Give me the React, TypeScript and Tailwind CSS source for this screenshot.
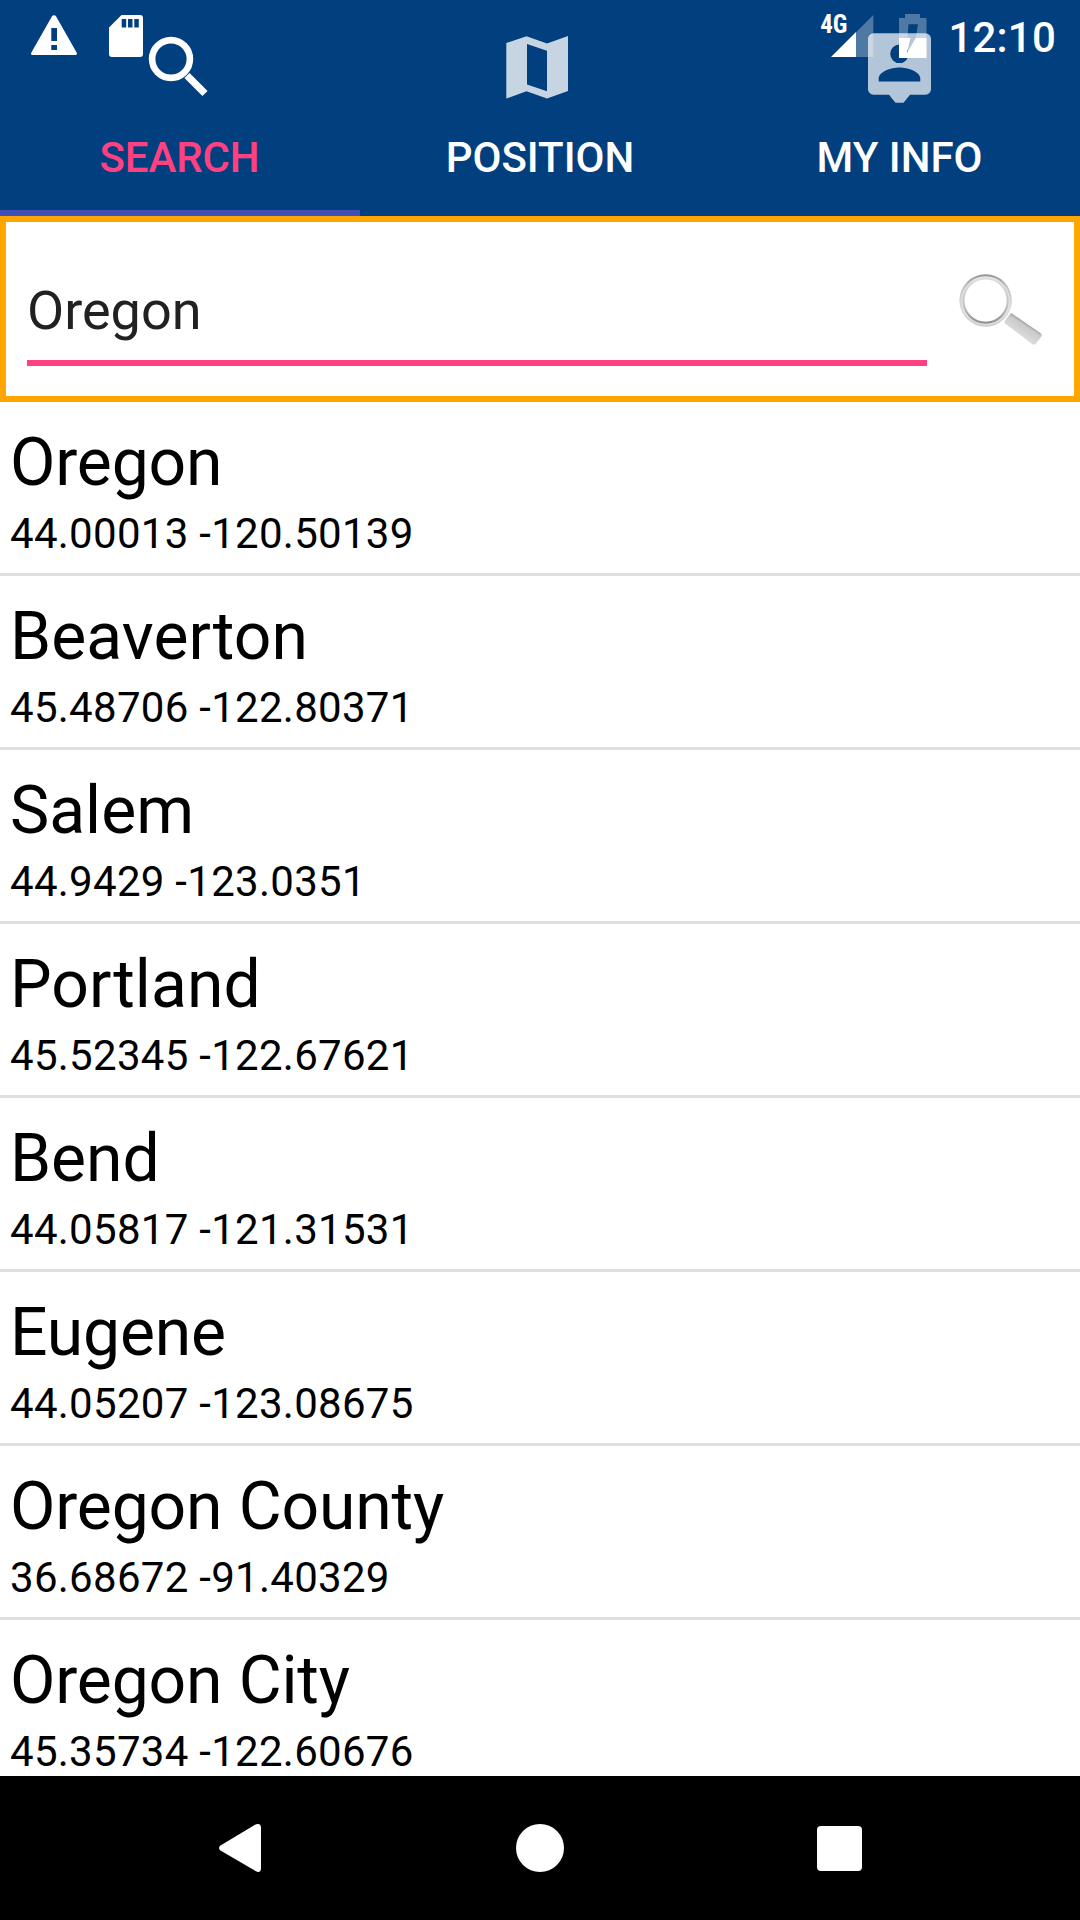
const rows = [
  ["Oregon", "44.00013 -120.50139", "tracking-[-0.15px]"],
  ["Beaverton", "45.48706 -122.80371", "tracking-[0.1px]"],
  ["Salem", "44.9429 -123.0351", "tracking-normal"],
  ["Portland", "45.52345 -122.67621", "tracking-[0.1px]"],
  ["Bend", "44.05817 -121.31531", "tracking-normal"],
  ["Eugene", "44.05207 -123.08675", "tracking-[-0.15px]"],
  ["Oregon County", "36.68672 -91.40329", "tracking-[-0.15px]"],
  ["Oregon City", "45.35734 -122.60676", "tracking-[-0.15px]"],
];

function WarningIcon() {
  return (
    <svg className="h-[41px] w-[46px]" viewBox="0 0 46 41">
      <path fill="#fff" fillRule="evenodd" d="M21 1.3a2.3 2.3 0 0 1 4 0L45.6 37.6c.8 1.5.2 2.4-1.4 2.4H1.8c-1.6 0-2.2-.9-1.4-2.4ZM20.3 13v13h5.7V13ZM20.3 30v5h5.7v-5Z" />
    </svg>
  );
}

function SdCardIcon() {
  return (
    <svg className="h-[42px] w-[34px]" viewBox="0 0 34 42">
      <path fill="#fff" fillRule="evenodd" d="M12.5 0H31a3 3 0 0 1 3 3v36a3 3 0 0 1-3 3H3a3 3 0 0 1-3-3V12.5ZM12.7 4v8.5h4.500V4ZM19 4v8.500h4.500V4ZM25.300 4v8.500h4.500V4Z" />
    </svg>
  );
}

function SignalIcon() {
  return (
    <svg className="h-[42px] w-[43px]" viewBox="0 0 43 42">
      <path fill="#fff" fillOpacity=".3" d="M25 17.300 42.300 0v42H25Z" />
      <path fill="#fff" d="M0 42 25 17v25Z" />
    </svg>
  );
}

function BatteryIcon() {
  return (
    <svg className="h-[44px] w-[28px]" viewBox="0 0 28 44">
      <path fill="#fff" fillOpacity=".3" fillRule="evenodd" d="M6 0h15v4h6.500v20H16.700L19 10.300H9.500L8.500 24H0V4h6Z" />
      <path fill="#fff" d="M0 24h11.500L8 39 16.700 24H27.500v20H0Z" />
    </svg>
  );
}

function TabSearchIcon() {
  return (
    <svg className="h-[72px] w-[72px]" viewBox="144 30 72 72">
      <circle cx="171" cy="59" r="18.900" fill="none" stroke="#fff" strokeWidth="6.600" />
      <path d="M187 75.500 205 93.500" stroke="#fff" strokeWidth="7.200" />
    </svg>
  );
}

function TabMapIcon() {
  return (
    <svg className="h-[72px] w-[72px]" viewBox="504 30 72 72">
      <path fill="#fff" fillOpacity=".78" fillRule="evenodd" d="M506.300 43 526.500 36.300 547 43.600 568 36V91L547 98.500 526.500 91.300 506.300 98.500ZM527 44V84.500L547 91.300V50.700Z" />
    </svg>
  );
}

function TabPersonIcon() {
  return (
    <svg className="h-[73px] w-[72px]" viewBox="864 30 72 73">
      <path fill="#fff" fillOpacity=".7" fillRule="evenodd" d="M873.500 33.300h52a5.500 5.500 0 0 1 5.500 5.500v50.400a5.500 5.500 0 0 1-5.500 5.500H910l-6.500 8h-8l-6.500-8h-15.500a5.500 5.500 0 0 1-5.500-5.500V38.800a5.500 5.500 0 0 1 5.500-5.500ZM899.500 44.500a9.300 9.300 0 1 0 0 18.600 9.300 9.300 0 1 0 0-18.600ZM878.700 81.500h41.600v-3c0-6.500-12-11-20.800-11s-20.800 4.500-20.800 11Z" />
    </svg>
  );
}

function MagnifierIcon() {
  return (
    <svg className="h-[96px] w-[96px]" viewBox="950 260 96 96">
      <defs>
        <linearGradient id="rim" x1="0" y1="0" x2="0" y2="1">
          <stop offset="0" stopColor="#989898" />
          <stop offset=".25" stopColor="#c6c6c6" />
          <stop offset=".7" stopColor="#dedede" />
          <stop offset="1" stopColor="#cfcfcf" />
        </linearGradient>
        <linearGradient id="rimInner" x1="0" y1="0" x2="0" y2="1">
          <stop offset="0" stopColor="#e0e0e0" />
          <stop offset=".6" stopColor="#c4c4c4" />
          <stop offset="1" stopColor="#8e8e8e" />
        </linearGradient>
        <linearGradient id="handle" gradientUnits="userSpaceOnUse" x1="1028" y1="322" x2="1020" y2="334">
          <stop offset="0" stopColor="#8c8c8c" />
          <stop offset=".3" stopColor="#cacaca" />
          <stop offset="1" stopColor="#dadada" />
        </linearGradient>
      </defs>
      <circle cx="986.600" cy="300.500" r="23.500" fill="none" stroke="#e6e6e6" strokeWidth="5" />
      <circle cx="986.600" cy="300.500" r="25.200" fill="none" stroke="url(#rim)" strokeWidth="2" />
      <circle cx="986.600" cy="300.500" r="22.200" fill="none" stroke="url(#rimInner)" strokeWidth="2" />
      <path fill="url(#handle)" d="M1013 313.500 1042 333.500Q1043 335 1042 337L1036.500 344Q1035 345.500 1033 344L1006 323.500Q1005 322 1006 320.500L1011 314Q1012 313 1013 313.500Z" />
    </svg>
  );
}

export default function App() {
  return (
    <div className="flex h-[1920px] w-[1080px] flex-col overflow-hidden bg-white font-['Roboto',sans-serif]">
      <header className="relative h-[216px] shrink-0 bg-[#023f7f]">
        <div className="grid h-full grid-cols-3 text-[42px] leading-[50px] font-medium tracking-[-0.1px] text-white">
          <div className="flex flex-col items-center border-b-[6px] border-[#3f51b5] pt-[30px] text-[#ff4081]">
            <TabSearchIcon />
            <span className="mt-[31px] mr-px">SEARCH</span>
          </div>
          <div className="flex flex-col items-center pt-[30px]">
            <TabMapIcon />
            <span className="mt-[31px] tracking-normal">POSITION</span>
          </div>
          <div className="flex flex-col items-center pt-[30px]">
            <TabPersonIcon />
            <span className="mt-[30px] mr-px tracking-normal">MY INFO</span>
          </div>
        </div>
        <div className="absolute inset-x-0 top-0 flex h-[72px] items-start pr-[24px] pl-[31px] text-white">
          <div className="mt-[15px] flex gap-[32px]">
            <WarningIcon />
            <SdCardIcon />
          </div>
          <div className="ml-auto flex items-start">
            <span className="mt-[13px] -mr-[16px] font-['Roboto_Condensed','Roboto',sans-serif] text-[25px] leading-6 font-bold">4G</span>
            <div className="mt-[15px]"><SignalIcon /></div>
            <div className="mt-[14px] ml-[25px]"><BatteryIcon /></div>
            <span className="mt-[13px] ml-[21px] text-[42px] leading-[50px] font-medium tracking-[0.2px]">12:10</span>
          </div>
        </div>
      </header>

      <section className="flex h-[186px] shrink-0 border-[6px] border-[#ffa500] pl-[21px]">
        <div className="mt-[54px] h-[90px] w-[900px] border-b-[6px] border-[#ff4081] pt-[3px] text-[54px] leading-[64px] text-[#212121]">Oregon</div>
        <div className="mt-[38px] ml-[22px]"><MagnifierIcon /></div>
      </section>

      <main className="min-h-0 flex-1 overflow-hidden text-black">
        {rows.map(([name, coords, tracking]) => (
          <div key={name} className="h-[174px] border-b-[3px] border-[#dfdfdf] pt-[22px] pl-[10px]">
            <div className={`text-[66px] leading-[78px] ${tracking}`}>{name}</div>
            <div className="mt-[7px] text-[42px] leading-[50px] tracking-[0.28px]">{coords}</div>
          </div>
        ))}
      </main>

      <nav className="flex h-[144px] shrink-0 items-center justify-between bg-black pr-[218px] pl-[218px]">
        <svg className="h-[48px] w-[44px]" viewBox="0 0 44 48">
          <path fill="#fff" d="M37 .7Q42.500-1.500 43 3v42Q42.500 49.500 38 47.300L2.500 26.500Q-.500 24 2.500 21.500Z" />
        </svg>
        <div className="h-12 w-12 rounded-full bg-white" />
        <div className="h-[45px] w-[45px] rounded-[4px] bg-white" />
      </nav>
    </div>
  );
}
